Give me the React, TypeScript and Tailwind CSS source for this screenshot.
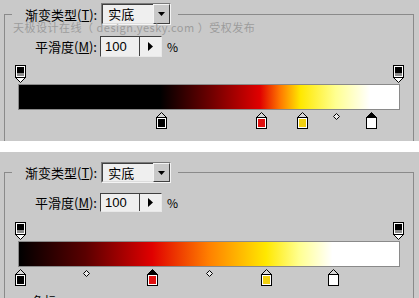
import React from "react";

const FONT = "'Noto Sans CJK SC', 'Liberation Sans', sans-serif";

type BStop = { x: number; color: string; selected?: boolean };

function TopStop({ x }: { x: number }) {
  return (
    <svg
      className="absolute top-0"
      style={{ left: x - 18 - 5 }}
      width="11"
      height="19"
      viewBox="0 0 11 19"
    >
      <path d="M0.5 12.5L5.5 17.5L10.5 12.5Z" fill="#ffffff" stroke="#000" />
      <rect x="0.5" y="0.5" width="10" height="12" fill="#ffffff" stroke="#000" />
      <rect x="2" y="2" width="7" height="6" fill="#000" />
      <rect x="2" y="8" width="7" height="3" fill="#8c8c8c" />
    </svg>
  );
}

function BottomStop({ s }: { s: BStop }) {
  return (
    <svg
      className="absolute top-[2px]"
      style={{ left: s.x - 18 - 5 }}
      width="11"
      height="17"
      viewBox="0 0 11 17"
    >
      <path
        d="M0.5 5.5L5.5 0.5L10.5 5.5Z"
        fill={s.selected ? "#000" : "#d8d8d8"}
        stroke="#000"
      />
      <rect x="0.5" y="5.5" width="10" height="11" fill="#ffffff" stroke="#000" />
      <rect x="2" y="7" width="7" height="8" fill={s.color} />
    </svg>
  );
}

function Diamond({ x }: { x: number }) {
  return (
    <svg
      className="absolute top-[3px]"
      style={{ left: x - 18 - 3 }}
      width="7"
      height="7"
      viewBox="0 0 7 7"
    >
      <path d="M3.5 0.5L6.5 3.5L3.5 6.5L0.5 3.5Z" fill="#ececec" stroke="#000" />
    </svg>
  );
}

function Dropdown({ h }: { h: string }) {
  return (
    <div
      className={`${h} w-[70px] flex items-stretch border border-t-[#7a7a7a] border-l-[#7a7a7a] border-b-[#f4f4f4] border-r-[#f4f4f4] bg-[#efefef]`}
    >
      <div className="flex-1 flex items-center pl-[5px] text-[13px] text-black border border-t-[#404040] border-l-[#404040] border-b-[#dcdcdc] border-r-0">
        实底
      </div>
      <div className="w-[17px] flex items-center justify-center bg-[#c9c9c9] border border-t-[#f4f4f4] border-l-[#f4f4f4] border-b-[#404040] border-r-[#404040]">
        <svg width="7" height="4" viewBox="0 0 7 4">
          <path d="M0 0H7L3.5 4Z" fill="#000" />
        </svg>
      </div>
    </div>
  );
}

function NumberBox({ h }: { h: string }) {
  return (
    <div
      className={`${h} w-[62px] flex items-stretch border border-t-[#404040] border-l-[#404040] border-b-[#e8e8e8] border-r-[#e8e8e8] bg-[#efefef]`}
    >
      <div className="w-[39px] flex items-center pl-[4px] text-[13px] text-black border-r border-r-[#404040] [font-family:'Liberation_Sans',sans-serif]">
        100
      </div>
      <div className="flex-1 flex items-center justify-center">
        <svg width="5" height="9" viewBox="0 0 5 9">
          <path d="M0 0L5 4.5L0 9Z" fill="#000" />
        </svg>
      </div>
    </div>
  );
}

function Track({
  gradient,
  tops,
  bottoms,
  diamonds,
  mt,
}: {
  gradient: string;
  tops: number[];
  bottoms: BStop[];
  diamonds: number[];
  mt: string;
}) {
  return (
    <div className={`${mt} ml-[13px] w-[382px] flex flex-col`}>
      <div className="relative h-[19px]">
        {tops.map((x) => (
          <TopStop key={x} x={x} />
        ))}
      </div>
      <div
        className="h-[26px] border border-[#8a8a8a]"
        style={{ background: gradient }}
      />
      <div className="relative h-[19px]">
        {diamonds.map((x) => (
          <Diamond key={x} x={x} />
        ))}
        {bottoms.map((s) => (
          <BottomStop key={s.x} s={s} />
        ))}
      </div>
    </div>
  );
}

function Group({
  dropH,
  inputH,
  rowMt,
  trackMt,
  gradient,
  bottoms,
  diamonds,
  children,
}: {
  dropH: string;
  inputH: string;
  rowMt: string;
  trackMt: string;
  gradient: string;
  bottoms: BStop[];
  diamonds: number[];
  children?: React.ReactNode;
}) {
  return (
    <fieldset className="m-0 p-0 min-w-0 min-h-[320px] border border-[#8a8a8a]">
      <legend className="ml-[7px] pl-[13px] pr-[7px] p-0">
        <div className="flex items-center">
          <span className="text-[13px] leading-none text-black">
            渐变类型(<span className="underline">T</span>):
          </span>
          <div className="ml-[4px]">
            <Dropdown h={dropH} />
          </div>
        </div>
      </legend>
      <div className={`${rowMt} ml-[30px] flex items-center`}>
        <span className="text-[13px] leading-none text-black">
          平滑度(<span className="underline">M</span>):
        </span>
        <div className="ml-[3px]">
          <NumberBox h={inputH} />
        </div>
        <span className="ml-[5px] text-[12px] leading-none text-black">%</span>
      </div>
      <Track
        mt={trackMt}
        gradient={gradient}
        tops={[19.5, 398]}
        bottoms={bottoms}
        diamonds={diamonds}
      />
      {children}
    </fieldset>
  );
}

export default function App() {
  const grad1 =
    "linear-gradient(to right, #000 0%, #000 37.2%, #6a0000 50%, #e00000 63.4%, #ff7a00 68.8%, #ffe800 74.1%, #ffff90 83.3%, #fff 92.4%, #fff 100%)";
  const grad2 =
    "linear-gradient(to right, #000 0%, #5a0000 17.5%, #e00000 35%, #ff8000 50%, #ffe800 65%, #ffff90 73.7%, #fff 82.5%, #fff 100%)";

  return (
    <div
      className="w-[419px] h-[298px] overflow-hidden bg-white flex flex-col"
      style={{ fontFamily: FONT }}
    >
      <div className="relative h-[141px] shrink-0 overflow-hidden bg-[#c9c9c9] pt-[3px] pl-[4px] pr-[5px]">
        <Group
          dropH="h-[22px]"
          inputH="h-[21px]"
          rowMt="mt-[11px]"
          trackMt="mt-[8px]"
          gradient={grad1}
          bottoms={[
            { x: 160.5, color: "#000" },
            { x: 260.5, color: "#e01010" },
            { x: 301.5, color: "#f0d010" },
            { x: 371, color: "#fff", selected: true },
          ]}
          diamonds={[336]}
        />
        <div className="absolute left-[13px] top-[21px] text-[11px] leading-[13px] tracking-[0.5px] text-[#9c9c9c]">
          天极设计在线（ design.yesky.com ）受权发布
        </div>
      </div>
      <div className="h-[11px] shrink-0 bg-white" />
      <div className="flex-1 overflow-hidden bg-[#c9c9c9] pt-[10px] pl-[4px] pr-[5px]">
        <Group
          dropH="h-[21px]"
          inputH="h-[19px]"
          rowMt="mt-[10px]"
          trackMt="mt-[10px]"
          gradient={grad2}
          bottoms={[
            { x: 19.5, color: "#000" },
            { x: 152, color: "#e01010", selected: true },
            { x: 266, color: "#f0d010" },
            { x: 333, color: "#fff" },
          ]}
          diamonds={[85.5, 208.5]}
        >
          <div className="ml-[27px] mt-[9px] text-[12px] leading-none text-black">
            色标
          </div>
        </Group>
      </div>
    </div>
  );
}
